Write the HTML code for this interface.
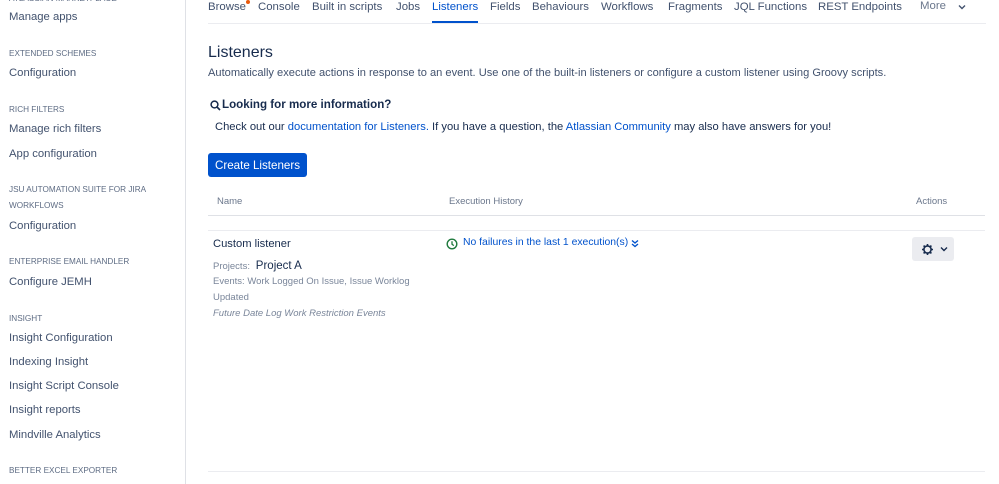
<!DOCTYPE html><html><head><style>
body{margin:0;width:999px;height:484px;overflow:hidden;background:#fff;font-family:"Liberation Sans",sans-serif;color:#172b4d;position:relative}
.a{position:absolute;white-space:nowrap}
.si{font-size:11.3px;color:#42526e;left:9px}
.sh{font-size:8.2px;color:#5e6c84;left:9px}
.nav{top:1px;font-size:11.4px;color:#42526e}
.lk{color:#0052cc}
</style></head><body>
<div class="a" style="left:185px;top:0;width:1px;height:484px;background:#dfe1e6"></div>
<div class="a sh" style="top:-6px">ATLASSIAN MARKETPLACE</div>
<div class="a si" style="top:11px">Manage apps</div>
<div class="a sh" style="top:49px">EXTENDED SCHEMES</div>
<div class="a si" style="top:67px">Configuration</div>
<div class="a sh" style="top:105px">RICH FILTERS</div>
<div class="a si" style="top:123px">Manage rich filters</div>
<div class="a si" style="top:148px">App configuration</div>
<div class="a sh" style="top:185px">JSU AUTOMATION SUITE FOR JIRA</div>
<div class="a sh" style="top:201px">WORKFLOWS</div>
<div class="a si" style="top:220px">Configuration</div>
<div class="a sh" style="top:257px">ENTERPRISE EMAIL HANDLER</div>
<div class="a si" style="top:276px">Configure JEMH</div>
<div class="a sh" style="top:314px">INSIGHT</div>
<div class="a si" style="top:332px">Insight Configuration</div>
<div class="a si" style="top:356px">Indexing Insight</div>
<div class="a si" style="top:380px">Insight Script Console</div>
<div class="a si" style="top:404px">Insight reports</div>
<div class="a si" style="top:429px">Mindville Analytics</div>
<div class="a sh" style="top:466px">BETTER EXCEL EXPORTER</div>

<div class="a nav" style="left:208px">Browse</div>
<div class="a" style="left:246px;top:0;width:4px;height:4px;border-radius:2px;background:#e8590c"></div>
<div class="a nav" style="left:258px">Console</div>
<div class="a nav" style="left:312px">Built in scripts</div>
<div class="a nav" style="left:396px">Jobs</div>
<div class="a nav" style="left:432px;color:#0052cc">Listeners</div>
<div class="a" style="left:432px;top:21px;width:46px;height:2px;background:#0052cc"></div>
<div class="a nav" style="left:490px">Fields</div>
<div class="a nav" style="left:532px">Behaviours</div>
<div class="a nav" style="left:601px">Workflows</div>
<div class="a nav" style="left:668px">Fragments</div>
<div class="a nav" style="left:734px">JQL Functions</div>
<div class="a nav" style="left:818px">REST Endpoints</div>
<div class="a nav" style="left:920px;top:0px;color:#6b778c">More</div>
<svg class="a" style="left:958px;top:4px" width="8" height="6" viewBox="0 0 8 6"><path d="M1 1.5L4 4.5L7 1.5" fill="none" stroke="#42526e" stroke-width="1.4"/></svg>
<div class="a" style="left:208px;top:23px;width:778px;height:1px;background:#ebecf0"></div>

<div class="a" style="left:208px;top:44px;font-size:16px">Listeners</div>
<div class="a" style="left:208px;top:67px;font-size:11.1px;color:#42526e">Automatically execute actions in response to an event. Use one of the built-in listeners or configure a custom listener using Groovy scripts.</div>
<svg class="a" style="left:210px;top:100px" width="11" height="11" viewBox="0 0 11 11"><circle cx="4.5" cy="4.5" r="3.4" fill="none" stroke="#172b4d" stroke-width="1.5"/><path d="M7 7L10 10" stroke="#172b4d" stroke-width="1.6"/></svg>
<div class="a" style="left:222px;top:98px;font-size:11.6px;font-weight:bold">Looking for more information?</div>
<div class="a" style="left:215px;top:121px;font-size:11.2px;color:#172b4d">Check out our <span class="lk">documentation for Listeners.</span> If you have a question, the <span class="lk">Atlassian Community</span> may also have answers for you!</div>
<div class="a" style="left:208px;top:153px;width:99px;height:24px;background:#0052cc;border-radius:3px;color:#fff;font-size:11.6px;line-height:25px;text-align:center">Create Listeners</div>
<div class="a" style="left:217px;top:196px;font-size:9.5px;color:#6b778c">Name</div>
<div class="a" style="left:449px;top:196px;font-size:9.5px;color:#6b778c">Execution History</div>
<div class="a" style="left:916px;top:196px;font-size:9.5px;color:#6b778c">Actions</div>
<div class="a" style="left:208px;top:215px;width:777px;height:1px;background:#dfe1e6"></div>
<div class="a" style="left:208px;top:230px;width:777px;height:1px;background:#ebecf0"></div>
<div class="a" style="left:213px;top:238px;font-size:11.2px">Custom listener</div>
<div class="a" style="left:213px;top:260px;font-size:9.5px;color:#7a869a">Projects: <span style="font-size:11.5px;color:#172b4d">&nbsp;Project A</span></div>
<div class="a" style="left:213px;top:276px;font-size:9.5px;color:#7a869a">Events: Work Logged On Issue, Issue Worklog</div>
<div class="a" style="left:213px;top:292px;font-size:9.5px;color:#7a869a">Updated</div>
<div class="a" style="left:213px;top:308px;font-size:9.5px;color:#7a869a;font-style:italic">Future Date Log Work Restriction Events</div>
<svg class="a" style="left:446px;top:238px" width="12" height="12" viewBox="0 0 12 12"><circle cx="6" cy="6" r="4.8" fill="none" stroke="#1f7a3d" stroke-width="1.4"/><path d="M6 3.3V6.2L7.8 7.6" fill="none" stroke="#1f7a3d" stroke-width="1.3"/></svg>
<div class="a" style="left:463px;top:237px;font-size:10.4px;color:#0052cc">No failures in the last 1 execution(s)</div>
<svg class="a" style="left:631px;top:239px" width="8" height="9" viewBox="0 0 8 9"><path d="M1 1.5L4 4L7 1.5M1 5L4 7.5L7 5" fill="none" stroke="#0052cc" stroke-width="1.4"/></svg>
<div class="a" style="left:912px;top:237px;width:42px;height:24px;background:#ebecf0;border-radius:3px"></div>
<svg class="a" style="left:921px;top:243px" width="13" height="13" viewBox="0 0 13 13"><circle cx="6.5" cy="6.5" r="3.6" fill="none" stroke="#172b4d" stroke-width="1.6"/><path d="M6.5 1v2M6.5 10v2M1 6.5h2M10 6.5h2M2.6 2.6l1.4 1.4M9 9l1.4 1.4M2.6 10.4L4 9M9 4l1.4-1.4" stroke="#172b4d" stroke-width="1.6"/></svg>
<svg class="a" style="left:940px;top:246px" width="8" height="6" viewBox="0 0 8 6"><path d="M1 1.5L4 4.5L7 1.5" fill="none" stroke="#172b4d" stroke-width="1.4"/></svg>
<div class="a" style="left:208px;top:471px;width:777px;height:1px;background:#ebecf0"></div>
</body></html>
